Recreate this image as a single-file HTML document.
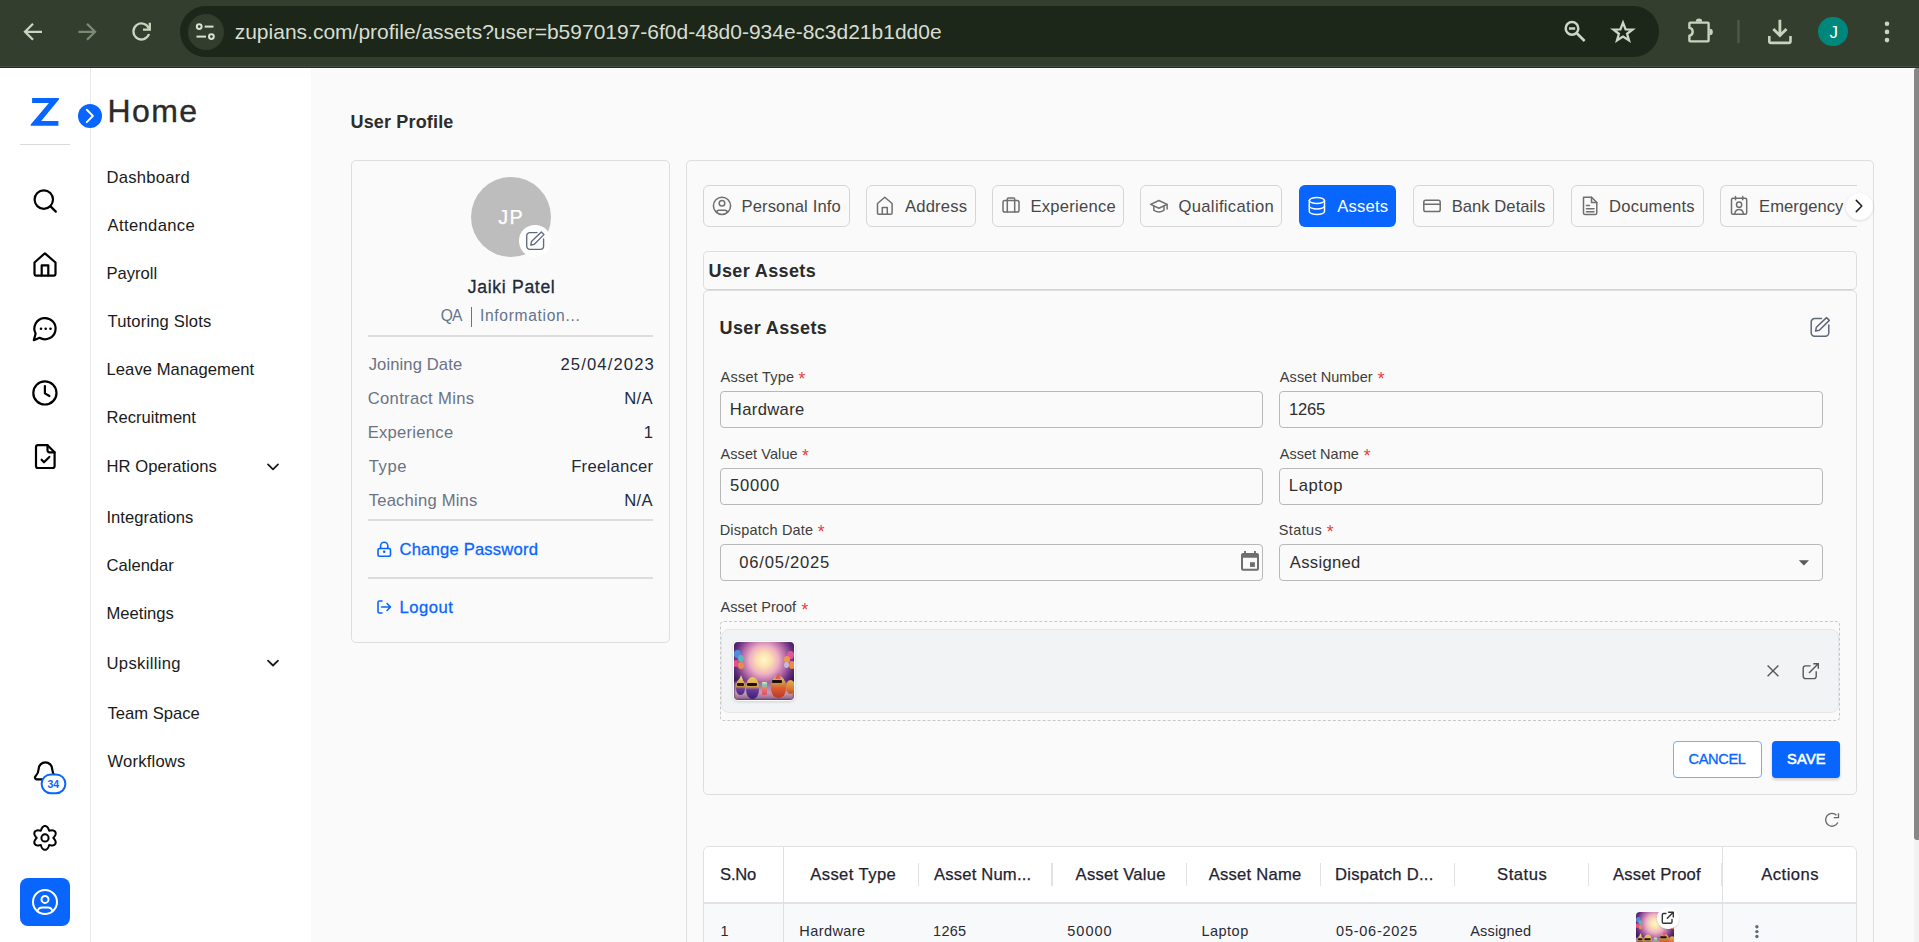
<!DOCTYPE html>
<html><head><meta charset="utf-8"><title>User Profile - Assets</title>
<style>
html,body{margin:0;padding:0;width:1919px;height:942px;overflow:hidden;background:#fafafa;font-family:"Liberation Sans",sans-serif;}
.t{position:absolute;white-space:pre;font-family:"Liberation Sans",sans-serif;}
svg{overflow:visible}
</style></head><body>
<div style="position:absolute;left:0px;top:0px;width:1919px;height:68px;background:#333e2f"></div>
<div style="position:absolute;left:0px;top:66px;width:1919px;height:1px;background:#444b41"></div>
<div style="position:absolute;left:0px;top:67px;width:1919px;height:1px;background:#232e21"></div>
<div style="position:absolute;left:180px;top:6px;width:1479px;height:51px;background:#1c2719;border-radius:25.5px"></div>
<div style="position:absolute;left:187.5px;top:13.8px;width:36px;height:36px;background:#323d2e;border-radius:50%"></div>
<div style="position:absolute;left:1818.2px;top:16.9px;width:29.6px;height:29.6px;background:#00877b;border-radius:50%"></div>
<div style="position:absolute;left:0px;top:68px;width:311px;height:874px;background:#ffffff"></div>
<div style="position:absolute;left:90px;top:68px;width:1px;height:874px;background:#e6e8ec"></div>
<div style="position:absolute;left:20px;top:144px;width:50px;height:1px;background:#dadada"></div>
<div style="position:absolute;left:20px;top:878.2px;width:50px;height:48px;background:#0866ff;border-radius:8px"></div>
<div style="position:absolute;left:351px;top:160px;width:319px;height:483px;box-sizing:border-box;border:1px solid #dedede;border-radius:5px;background:#fafafa"></div>
<div style="position:absolute;left:471px;top:177px;width:80px;height:80px;background:#bdbdbd;border-radius:50%"></div>
<div style="position:absolute;left:519px;top:225px;width:31.5px;height:31.5px;background:#ffffff;border-radius:50%"></div>
<div style="position:absolute;left:471px;top:307px;width:1.3px;height:20px;background:#64748b"></div>
<div style="position:absolute;left:368px;top:334.5px;width:285px;height:2px;background:#dcdcdc"></div>
<div style="position:absolute;left:368px;top:519px;width:285px;height:2px;background:#dcdcdc"></div>
<div style="position:absolute;left:368px;top:577px;width:285px;height:2px;background:#dcdcdc"></div>
<div style="position:absolute;left:686px;top:160px;width:1188px;height:800px;box-sizing:border-box;border:1px solid #dedede;border-radius:5px;background:#fafafa"></div>
<div style="position:absolute;left:703px;top:185px;width:147px;height:42px;box-sizing:border-box;border:1px solid #d6d6d6;border-radius:6px;background:#fafafa"></div>
<div style="position:absolute;left:866px;top:185px;width:110px;height:42px;box-sizing:border-box;border:1px solid #d6d6d6;border-radius:6px;background:#fafafa"></div>
<div style="position:absolute;left:992px;top:185px;width:132px;height:42px;box-sizing:border-box;border:1px solid #d6d6d6;border-radius:6px;background:#fafafa"></div>
<div style="position:absolute;left:1140px;top:185px;width:142px;height:42px;box-sizing:border-box;border:1px solid #d6d6d6;border-radius:6px;background:#fafafa"></div>
<div style="position:absolute;left:1299px;top:185px;width:97px;height:42px;background:#0866ff;border-radius:6px"></div>
<div style="position:absolute;left:1413px;top:185px;width:141px;height:42px;box-sizing:border-box;border:1px solid #d6d6d6;border-radius:6px;background:#fafafa"></div>
<div style="position:absolute;left:1571px;top:185px;width:133px;height:42px;box-sizing:border-box;border:1px solid #d6d6d6;border-radius:6px;background:#fafafa"></div>
<div style="position:absolute;left:1720px;top:185px;width:137px;height:42px;box-sizing:border-box;border:1px solid #d6d6d6;border-right:none;border-radius:6px 0 0 6px;background:#fafafa"></div>
<div style="position:absolute;left:703px;top:251px;width:1154px;height:39px;box-sizing:border-box;border:1px solid #dedede;border-bottom-color:#d4d4d4;border-radius:5px;background:#fafafa"></div>
<div style="position:absolute;left:703px;top:290px;width:1154px;height:505px;box-sizing:border-box;border:1px solid #dedede;border-radius:5px;background:#fafafa"></div>
<div style="position:absolute;left:720px;top:391px;width:543px;height:37px;box-sizing:border-box;border:1px solid #b8b8b8;border-radius:4px;background:#fafafa"></div>
<div style="position:absolute;left:1279px;top:391px;width:544px;height:37px;box-sizing:border-box;border:1px solid #b8b8b8;border-radius:4px;background:#fafafa"></div>
<div style="position:absolute;left:720px;top:468px;width:543px;height:37px;box-sizing:border-box;border:1px solid #b8b8b8;border-radius:4px;background:#fafafa"></div>
<div style="position:absolute;left:1279px;top:468px;width:544px;height:37px;box-sizing:border-box;border:1px solid #b8b8b8;border-radius:4px;background:#fafafa"></div>
<div style="position:absolute;left:720px;top:544px;width:543px;height:37px;box-sizing:border-box;border:1px solid #b8b8b8;border-radius:4px;background:#fafafa"></div>
<div style="position:absolute;left:1279px;top:544px;width:544px;height:37px;box-sizing:border-box;border:1px solid #b8b8b8;border-radius:4px;background:#fafafa"></div>
<div style="position:absolute;left:720px;top:621px;width:1120px;height:100px;box-sizing:border-box;border:1px dashed #c8c8c8;border-radius:4px"></div>
<div style="position:absolute;left:721px;top:629px;width:1118px;height:84px;box-sizing:border-box;border:1px solid #e4e6ea;border-radius:8px;background:#f2f3f5"></div>
<div style="position:absolute;left:1673px;top:741px;width:89px;height:37px;box-sizing:border-box;border:1px solid #7eaaf7;border-radius:4px;background:#fff"></div>
<div style="position:absolute;left:1772px;top:741px;width:68px;height:37px;background:#0866ff;border-radius:4px;box-shadow:0 2px 3px rgba(0,0,0,0.18)"></div>
<div style="position:absolute;left:703px;top:846px;width:1154px;height:120px;box-sizing:border-box;border:1px solid #e0e0e0;border-radius:6px;background:#f8f9fb;overflow:hidden"></div>
<div style="position:absolute;left:704px;top:847px;width:1152px;height:55px;background:#ffffff;border-radius:5px 5px 0 0"></div>
<div style="position:absolute;left:704px;top:902px;width:1152px;height:2px;background:#dfe2e6"></div>
<div style="position:absolute;left:783px;top:847px;width:1px;height:100px;background:#e0e0e0"></div>
<div style="position:absolute;left:1722px;top:847px;width:1px;height:100px;background:#e0e0e0"></div>
<div style="position:absolute;left:917.5px;top:862.5px;width:1.5px;height:23.5px;background:#e2e2e2"></div>
<div style="position:absolute;left:1051.3px;top:862.5px;width:1.5px;height:23.5px;background:#e2e2e2"></div>
<div style="position:absolute;left:1185.5px;top:862.5px;width:1.5px;height:23.5px;background:#e2e2e2"></div>
<div style="position:absolute;left:1319.6px;top:862.5px;width:1.5px;height:23.5px;background:#e2e2e2"></div>
<div style="position:absolute;left:1453.8px;top:862.5px;width:1.5px;height:23.5px;background:#e2e2e2"></div>
<div style="position:absolute;left:1587.6px;top:862.5px;width:1.5px;height:23.5px;background:#e2e2e2"></div>
<div style="position:absolute;left:1721px;top:862.5px;width:1.5px;height:23.5px;background:#e2e2e2"></div>
<div style="position:absolute;left:1914px;top:68px;width:5px;height:874px;background:#f1f1f1"></div>
<div style="position:absolute;left:1914px;top:68px;width:5px;height:771.5px;background:#878787;border-radius:3px 0 0 3px"></div>
<div style="position:absolute;left:733px;top:641px;width:62px;height:60px;border-radius:5px;background:#fff;box-shadow:0 1px 3px rgba(0,0,0,0.15)"></div>
<div style="position:absolute;left:734px;top:642px;width:60px;height:58px;border-radius:4px;overflow:hidden"><div style="position:absolute;left:0;top:0;width:60px;height:58px;overflow:hidden;filter:blur(0.6px);
background:radial-gradient(ellipse 40px 40px at 30px 18px, #fff8c8 0%, #fce0b0 18%, #eeb0c4 36%, #b46aa6 55%, #6a3282 72%, #3a1a5a 86%, #1a0c34 100%);">
  <div style="position:absolute;left:0;top:40px;width:60px;height:18px;background:linear-gradient(#9a6a98,#c8a0b8 60%,#8a5a88);filter:blur(1px)"></div>
  <div style="position:absolute;left:0px;top:8px;width:7px;height:8px;border-radius:50%;background:#4f8fd8;filter:blur(0.5px)"></div>
  <div style="position:absolute;left:4px;top:13px;width:6px;height:7px;border-radius:50%;background:#5ab7c0;filter:blur(0.5px)"></div>
  <div style="position:absolute;left:-1px;top:18px;width:6px;height:7px;border-radius:50%;background:#e0508a;filter:blur(0.5px)"></div>
  <div style="position:absolute;left:4px;top:20px;width:6px;height:7px;border-radius:50%;background:#e88a50;filter:blur(0.5px)"></div>
  <div style="position:absolute;left:53px;top:9px;width:7px;height:8px;border-radius:50%;background:#e055a0;filter:blur(0.5px)"></div>
  <div style="position:absolute;left:50px;top:14px;width:6px;height:7px;border-radius:50%;background:#f09a48;filter:blur(0.5px)"></div>
  <div style="position:absolute;left:55px;top:19px;width:6px;height:8px;border-radius:50%;background:#f08a40;filter:blur(0.5px)"></div>
  <div style="position:absolute;left:50px;top:20px;width:5px;height:6px;border-radius:50%;background:#c8b8d8;filter:blur(0.5px)"></div>
  <div style="position:absolute;left:1.5px;top:37px;width:9px;height:16px;border-radius:50% 50% 45% 45%;background:linear-gradient(#e6c458 0%,#c89a40 45%,#6a3a9a 62%,#4a2a7a 100%);filter:blur(0.5px)"></div>
  <div style="position:absolute;left:12px;top:35px;width:12.5px;height:22px;border-radius:50% 50% 45% 45%;background:linear-gradient(#e8c860 0%,#d8a848 42%,#6a3aa0 58%,#3a2070 100%);filter:blur(0.5px)"></div>
  <div style="position:absolute;left:27.7px;top:40px;width:5px;height:13px;border-radius:1px;background:linear-gradient(#f0e8c0,#7ad0b0 20%,#f07070 55%,#e05060);filter:blur(0.6px)"></div>
  <div style="position:absolute;left:36.8px;top:34px;width:15.5px;height:22px;border-radius:50% 50% 45% 45%;background:linear-gradient(#e8c060 0%,#c89040 35%,#e05a30 55%,#b83a20 100%);filter:blur(0.5px)"></div>
  <div style="position:absolute;left:52px;top:38px;width:9px;height:14px;border-radius:50%;background:linear-gradient(#e8b050,#e07a30 60%,#c05020);filter:blur(0.5px)"></div>
  <div style="position:absolute;left:3.2px;top:41px;width:7px;height:2.6px;background:#2a1414;border-radius:1px;filter:blur(0.3px)"></div>
  <div style="position:absolute;left:12.9px;top:41px;width:10px;height:3.2px;background:#1a1010;border-radius:1px;filter:blur(0.3px)"></div>
  <div style="position:absolute;left:37.5px;top:38.2px;width:10.5px;height:3.2px;background:#1a1010;border-radius:1px;filter:blur(0.3px)"></div>
  <div style="position:absolute;left:41px;top:31px;width:0;height:0;border-left:3.5px solid transparent;border-right:3.5px solid transparent;border-bottom:6.5px solid #e05a5a;filter:blur(0.3px)"></div>
  <div style="position:absolute;left:4.5px;top:33px;width:0;height:0;border-left:2px solid transparent;border-right:2px solid transparent;border-bottom:5px solid #e8d070;filter:blur(0.3px)"></div>
</div></div>
<div style="position:absolute;left:1636px;top:912px;width:38px;height:40px;border-radius:4px;overflow:hidden"><div style="position:absolute;left:0;top:0;transform:scale(0.64);transform-origin:0 0;width:60px;height:58px;overflow:hidden;filter:blur(0.6px);
background:radial-gradient(ellipse 40px 40px at 30px 18px, #fff8c8 0%, #fce0b0 18%, #eeb0c4 36%, #b46aa6 55%, #6a3282 72%, #3a1a5a 86%, #1a0c34 100%);">
  <div style="position:absolute;left:0;top:40px;width:60px;height:18px;background:linear-gradient(#9a6a98,#c8a0b8 60%,#8a5a88);filter:blur(1px)"></div>
  <div style="position:absolute;left:0px;top:8px;width:7px;height:8px;border-radius:50%;background:#4f8fd8;filter:blur(0.5px)"></div>
  <div style="position:absolute;left:4px;top:13px;width:6px;height:7px;border-radius:50%;background:#5ab7c0;filter:blur(0.5px)"></div>
  <div style="position:absolute;left:-1px;top:18px;width:6px;height:7px;border-radius:50%;background:#e0508a;filter:blur(0.5px)"></div>
  <div style="position:absolute;left:4px;top:20px;width:6px;height:7px;border-radius:50%;background:#e88a50;filter:blur(0.5px)"></div>
  <div style="position:absolute;left:53px;top:9px;width:7px;height:8px;border-radius:50%;background:#e055a0;filter:blur(0.5px)"></div>
  <div style="position:absolute;left:50px;top:14px;width:6px;height:7px;border-radius:50%;background:#f09a48;filter:blur(0.5px)"></div>
  <div style="position:absolute;left:55px;top:19px;width:6px;height:8px;border-radius:50%;background:#f08a40;filter:blur(0.5px)"></div>
  <div style="position:absolute;left:50px;top:20px;width:5px;height:6px;border-radius:50%;background:#c8b8d8;filter:blur(0.5px)"></div>
  <div style="position:absolute;left:1.5px;top:37px;width:9px;height:16px;border-radius:50% 50% 45% 45%;background:linear-gradient(#e6c458 0%,#c89a40 45%,#6a3a9a 62%,#4a2a7a 100%);filter:blur(0.5px)"></div>
  <div style="position:absolute;left:12px;top:35px;width:12.5px;height:22px;border-radius:50% 50% 45% 45%;background:linear-gradient(#e8c860 0%,#d8a848 42%,#6a3aa0 58%,#3a2070 100%);filter:blur(0.5px)"></div>
  <div style="position:absolute;left:27.7px;top:40px;width:5px;height:13px;border-radius:1px;background:linear-gradient(#f0e8c0,#7ad0b0 20%,#f07070 55%,#e05060);filter:blur(0.6px)"></div>
  <div style="position:absolute;left:36.8px;top:34px;width:15.5px;height:22px;border-radius:50% 50% 45% 45%;background:linear-gradient(#e8c060 0%,#c89040 35%,#e05a30 55%,#b83a20 100%);filter:blur(0.5px)"></div>
  <div style="position:absolute;left:52px;top:38px;width:9px;height:14px;border-radius:50%;background:linear-gradient(#e8b050,#e07a30 60%,#c05020);filter:blur(0.5px)"></div>
  <div style="position:absolute;left:3.2px;top:41px;width:7px;height:2.6px;background:#2a1414;border-radius:1px;filter:blur(0.3px)"></div>
  <div style="position:absolute;left:12.9px;top:41px;width:10px;height:3.2px;background:#1a1010;border-radius:1px;filter:blur(0.3px)"></div>
  <div style="position:absolute;left:37.5px;top:38.2px;width:10.5px;height:3.2px;background:#1a1010;border-radius:1px;filter:blur(0.3px)"></div>
  <div style="position:absolute;left:41px;top:31px;width:0;height:0;border-left:3.5px solid transparent;border-right:3.5px solid transparent;border-bottom:6.5px solid #e05a5a;filter:blur(0.3px)"></div>
  <div style="position:absolute;left:4.5px;top:33px;width:0;height:0;border-left:2px solid transparent;border-right:2px solid transparent;border-bottom:5px solid #e8d070;filter:blur(0.3px)"></div>
</div></div>
<svg style="position:absolute;left:0px;top:0px;" width="1919" height="68" viewBox="0 0 1919 68" fill="none">
<g stroke="#c8d6c0" stroke-width="2.3" fill="none" stroke-linecap="butt" stroke-linejoin="miter">
  <path d="M42 31.8 H25.5 M33 23.8 L25 31.8 L33 39.8"/>
  <path d="M78.5 31.8 H95 M87 23.8 L95 31.8 L87 39.8" stroke="#7b8a75"/>
  <path d="M148.9 28.6 A8 8 0 1 0 149 34"/>
  <path d="M149.8 22.8 V29.6 H143"/>
</g>
<g stroke="#d8e2d2" stroke-width="2" stroke-linecap="butt" fill="none">
  <circle cx="199.2" cy="26.6" r="2.4"/>
  <path d="M204.6 26.6 H213.5"/>
  <circle cx="211.4" cy="36.6" r="2.4"/>
  <path d="M196.5 36.6 H206"/>
</g>
<g stroke="#ccd6c6" stroke-width="2.5" fill="none" stroke-linecap="butt" stroke-linejoin="miter">
  <circle cx="1572" cy="28.4" r="6.3"/>
  <path d="M1569 28.5 H1575.2"/>
  <path d="M1576.6 33 L1584.6 41"/>
  <path d="M1623 22.6 L1625.6 29.4 L1632.6 29.5 L1627.1 33.8 L1629 40.3 L1623 36.5 L1617 40.3 L1618.9 33.8 L1613.4 29.5 L1620.4 29.4 Z" stroke-width="2.3"/>
</g>
<g stroke="#c5d5bd" stroke-width="2.4" fill="none" stroke-linejoin="round">
  <path d="M1690.2 22.6 H1707.8 A0.8 0.8 0 0 1 1708.6 23.4 V40.6 A0.8 0.8 0 0 1 1707.8 41.4 H1690.2 A0.8 0.8 0 0 1 1689.4 40.6 V35.6 A3.9 3.9 0 0 0 1689.4 27.9 V23.4 A0.8 0.8 0 0 1 1690.2 22.6 Z"/>
  <path d="M1779.9 19.8 V35.2 M1773.3 29 L1779.9 35.6 L1786.5 29" stroke-width="2.8" stroke-linejoin="miter"/>
  <path d="M1769.3 36 V41.3 A1.6 1.6 0 0 0 1770.9 42.9 H1788.9 A1.6 1.6 0 0 0 1790.5 41.3 V36" stroke-width="2.6"/>
</g>
<g fill="#c5d5bd">
  <path d="M1695.8 21.8 A3.2 3.2 0 0 1 1702.2 21.8 Z"/>
  <path d="M1709.6 28.8 A3.2 3.2 0 0 1 1709.6 35.2 Z"/>
</g>
<rect x="1737.2" y="19.8" width="2.5" height="23.5" rx="1" fill="#4b5947"/>
<g fill="#c8d6c0">
  <circle cx="1887" cy="23.8" r="2.3"/>
  <circle cx="1887" cy="31.9" r="2.3"/>
  <circle cx="1887" cy="40.1" r="2.3"/>
</g>
</svg>
<svg style="position:absolute;left:0px;top:68px;top:0px;" width="311" height="874" viewBox="0 0 311 874" fill="none">
<path d="M32.1 98.1 H58.9 V99.6 L41.2 121 H58.4 V125.8 H30.7 V124.4 L48.9 103.1 H32.1 Z" fill="#0866ff"/>
<circle cx="90" cy="115.9" r="12" fill="#0866ff"/>
<path d="M86.8 109.8 L92.9 115.9 L86.8 122.1" stroke="#fff" stroke-width="2" fill="none" stroke-linecap="round" stroke-linejoin="round"/>
<g stroke="#000" stroke-width="2.2" fill="none" stroke-linecap="round" stroke-linejoin="round">
  <circle cx="43.8" cy="199.6" r="9.2"/>
  <path d="M50.6 206.4 L55.8 211.6"/>
  <path d="M34.5 262.5 L44.9 253.3 L55.5 262.5 V274 A1.6 1.6 0 0 1 54 275.6 H36 A1.6 1.6 0 0 1 34.5 274 Z"/>
  <path d="M41.7 275.6 V265.4 H48.3 V275.6"/>
  <path d="M33.8 340.2 L35.6 333.6 A10.6 10.6 0 1 1 39.6 337.8 Z"/>
  <circle cx="44.9" cy="392.9" r="11.6"/>
  <path d="M44.9 386 V393.4 L49.4 396"/>
  <path d="M47.5 445.2 H38 A2 2 0 0 0 36 447.2 V466 A2 2 0 0 0 38 468 H52.6 A2 2 0 0 0 54.6 466 V452.3 Z"/>
  <path d="M47.5 445.2 V450.3 A2 2 0 0 0 49.5 452.3 H54.6"/>
  <path d="M41.6 459.7 L44 462.3 L49.3 456.9"/>
  <path d="M36.6 779.3 A1.7 1.7 0 0 1 35.3 776.6 C37.3 774.4 38.6 772.6 38.6 769.2 A6.8 6.8 0 0 1 52.2 769.2 C52.2 772.6 53.5 774.4 55.5 776.6 A1.7 1.7 0 0 1 54.2 779.3 Z"/>
</g>
<g fill="#000">
  <circle cx="41" cy="328.8" r="1.3"/>
  <circle cx="45.7" cy="328.8" r="1.3"/>
  <circle cx="50.5" cy="328.8" r="1.3"/>
</g>
<rect x="41.6" y="774.4" width="23.8" height="18.8" rx="9.4" fill="#fff" stroke="#0866ff" stroke-width="2"/>
<g stroke="#000" stroke-width="2" fill="none" stroke-linejoin="round">
  <path d="M53.30 837.90 L53.51 838.20 L53.78 838.51 L54.08 838.85 L54.38 839.22 L54.66 839.60 L54.93 840.01 L55.17 840.44 L55.37 840.87 L55.52 841.32 L55.63 841.77 L55.68 842.21 L55.67 842.65 L55.61 843.07 L55.49 843.48 L55.31 843.85 L55.07 844.19 L54.78 844.50 L54.45 844.77 L54.07 844.99 L53.66 845.17 L53.22 845.30 L52.76 845.39 L52.28 845.44 L51.79 845.44 L51.31 845.42 L50.83 845.36 L50.37 845.29 L49.92 845.20 L49.51 845.12 L49.15 845.09 L49.00 845.42 L48.86 845.81 L48.71 846.24 L48.55 846.68 L48.36 847.12 L48.14 847.56 L47.89 847.97 L47.61 848.36 L47.30 848.72 L46.96 849.04 L46.60 849.30 L46.22 849.52 L45.82 849.67 L45.41 849.77 L45.00 849.80 L44.59 849.77 L44.18 849.67 L43.78 849.52 L43.40 849.30 L43.04 849.04 L42.70 848.72 L42.39 848.36 L42.11 847.97 L41.86 847.56 L41.64 847.12 L41.45 846.68 L41.29 846.24 L41.14 845.81 L41.00 845.42 L40.85 845.09 L40.49 845.12 L40.08 845.20 L39.63 845.29 L39.17 845.36 L38.69 845.42 L38.21 845.44 L37.72 845.44 L37.24 845.39 L36.78 845.30 L36.34 845.17 L35.93 844.99 L35.55 844.77 L35.22 844.50 L34.93 844.19 L34.69 843.85 L34.51 843.48 L34.39 843.07 L34.33 842.65 L34.32 842.21 L34.37 841.77 L34.48 841.32 L34.63 840.87 L34.83 840.44 L35.07 840.01 L35.34 839.60 L35.62 839.22 L35.92 838.85 L36.22 838.51 L36.49 838.20 L36.70 837.90 L36.49 837.60 L36.22 837.29 L35.92 836.95 L35.62 836.58 L35.34 836.20 L35.07 835.79 L34.83 835.36 L34.63 834.93 L34.48 834.48 L34.37 834.03 L34.32 833.59 L34.33 833.15 L34.39 832.73 L34.51 832.32 L34.69 831.95 L34.93 831.61 L35.22 831.30 L35.55 831.03 L35.93 830.81 L36.34 830.63 L36.78 830.50 L37.24 830.41 L37.72 830.36 L38.21 830.36 L38.69 830.38 L39.17 830.44 L39.63 830.51 L40.08 830.60 L40.49 830.68 L40.85 830.71 L41.00 830.38 L41.14 829.99 L41.29 829.56 L41.45 829.12 L41.64 828.68 L41.86 828.24 L42.11 827.83 L42.39 827.44 L42.70 827.08 L43.04 826.76 L43.40 826.50 L43.78 826.28 L44.18 826.13 L44.59 826.03 L45.00 826.00 L45.41 826.03 L45.82 826.13 L46.22 826.28 L46.60 826.50 L46.96 826.76 L47.30 827.08 L47.61 827.44 L47.89 827.83 L48.14 828.24 L48.36 828.68 L48.55 829.12 L48.71 829.56 L48.86 829.99 L49.00 830.38 L49.15 830.71 L49.51 830.68 L49.92 830.60 L50.37 830.51 L50.83 830.44 L51.31 830.38 L51.79 830.36 L52.28 830.36 L52.76 830.41 L53.22 830.50 L53.66 830.63 L54.07 830.81 L54.45 831.03 L54.78 831.30 L55.07 831.61 L55.31 831.95 L55.49 832.32 L55.61 832.73 L55.67 833.15 L55.68 833.59 L55.63 834.03 L55.52 834.48 L55.37 834.93 L55.17 835.36 L54.93 835.79 L54.66 836.20 L54.38 836.58 L54.08 836.95 L53.78 837.29 L53.51 837.60 L53.30 837.90 Z"/>
  <circle cx="45" cy="837.9" r="3.6"/>
</g>
<g stroke="#fff" stroke-width="2" fill="none">
  <circle cx="45" cy="902" r="12"/>
  <circle cx="45" cy="899.4" r="3.5"/>
  <path d="M37.6 910.9 A4.8 4.8 0 0 1 42.3 907.4 H47.7 A4.8 4.8 0 0 1 52.4 911"/>
</g>
</svg>
<svg style="position:absolute;left:0px;top:0px;" width="311" height="942" viewBox="0 0 311 942" fill="none">
<g stroke="#1a1a1a" stroke-width="1.8" fill="none" stroke-linecap="round" stroke-linejoin="round">
  <path d="M268 464.4 L273 469.3 L278 464.4"/>
  <path d="M268 660.6 L273 665.5 L278 660.6"/>
</g>
</svg>
<svg style="position:absolute;left:0px;top:0px;" width="700" height="700" viewBox="0 0 700 700" fill="none">
<g stroke="#5f6b7d" stroke-width="1.35" fill="none" stroke-linecap="round" stroke-linejoin="round">
  <path d="M537 232.6 H530 A3.3 3.3 0 0 0 526.7 235.9 V246.1 A3.3 3.3 0 0 0 530 249.4 H540.3 A3.3 3.3 0 0 0 543.6 246.1 V239"/>
  <path d="M530.8 245 L531.5 241.4 L541.3 232 L543.9 234.6 L534.3 244.3 Z"/>
</g>
<g stroke="#0866ff" stroke-width="1.6" fill="none" stroke-linecap="round" stroke-linejoin="round">
  <rect x="378" y="548.5" width="12.5" height="7.8" rx="1.5"/>
  <path d="M380.6 548.5 V545.8 A3.6 3.6 0 0 1 387.8 545.8 V548.5"/>
  <path d="M382 601 H379.5 A1.5 1.5 0 0 0 378 602.5 V611.5 A1.5 1.5 0 0 0 379.5 613 H382"/>
  <path d="M381.6 607 H390.4 M387.1 603.5 L390.5 607 L387.1 610.5"/>
</g>
<circle cx="384.2" cy="551.8" r="1.3" fill="#0866ff"/>
</svg>
<svg style="position:absolute;left:0px;top:0px;" width="1919" height="942" viewBox="0 0 1919 942" fill="none">
<g stroke="#6f6f6f" stroke-width="1.5" fill="none" stroke-linecap="round" stroke-linejoin="round">
  <circle cx="722" cy="205.8" r="8.6"/>
  <circle cx="722" cy="203.2" r="2.8"/>
  <path d="M716.6 212.4 A2.3 2.3 0 0 1 718.8 210.3 H725.2 A2.3 2.3 0 0 1 727.4 212.4"/>
  <path d="M877.5 203.5 L884.8 197.3 L892.1 203.5 V213 A1.3 1.3 0 0 1 890.8 214.3 H878.8 A1.3 1.3 0 0 1 877.5 213 Z"/>
  <path d="M882.3 214.3 V207.5 H887.3 V214.3"/>
  <rect x="1003" y="200.6" width="16" height="11.5" rx="1.8"/>
  <path d="M1007.3 212.1 V200.6 M1014.7 212.1 V200.6 M1007.3 200.6 V198.9 A1 1 0 0 1 1008.3 197.9 H1013.7 A1 1 0 0 1 1014.7 198.9 V200.6"/>
  <path d="M1150.7 204.4 L1158.9 200.5 L1167.1 204.4 L1158.9 208.3 Z"/>
  <path d="M1153.8 206.1 V210.3 C1156 212.4 1161.8 212.4 1164 210.3 V206.1"/>
  <path d="M1167.1 204.4 V209"/>
  <path d="M1583.5 197.2 H1591.5 L1596.8 202.5 V213 A1.5 1.5 0 0 1 1595.3 214.5 H1585 A1.5 1.5 0 0 1 1583.5 213 Z"/>
  <path d="M1591.5 197.2 V202.5 H1596.8"/>
  <path d="M1586.5 205.5 H1589.5 M1586.5 208.7 H1594 M1586.5 211.8 H1594"/>
  <rect x="1423.8" y="200.2" width="16.4" height="11.4" rx="1.8"/>
  <path d="M1423.8 204.3 H1440.2"/>
  <rect x="1731.5" y="198.3" width="15.2" height="16" rx="1.5"/>
  <path d="M1735.5 196.5 V199.8 M1742.7 196.5 V199.8"/>
  <circle cx="1739.1" cy="204.7" r="2.6"/>
  <path d="M1734.6 214.3 C1735.2 210.8 1737 209.6 1739.1 209.6 C1741.2 209.6 1743 210.8 1743.6 214.3"/>
</g>
<g stroke="#ffffff" stroke-width="1.5" fill="none" stroke-linecap="round" stroke-linejoin="round">
  <ellipse cx="1316.9" cy="200.5" rx="7.6" ry="3"/>
  <path d="M1309.3 200.5 V211.5 A7.6 3 0 0 0 1324.5 211.5 V200.5"/>
  <path d="M1309.3 206 A7.6 3 0 0 0 1324.5 206"/>
</g>
</svg>
<svg style="position:absolute;left:0px;top:0px;" width="1919" height="942" viewBox="0 0 1919 942" fill="none">
<g stroke="#5f6877" stroke-width="1.5" fill="none" stroke-linecap="round" stroke-linejoin="round">
  <path d="M1821.5 318.6 H1814.6 A3.4 3.4 0 0 0 1811.2 322 V332.8 A3.4 3.4 0 0 0 1814.6 336.2 H1825.4 A3.4 3.4 0 0 0 1828.8 332.8 V325"/>
  <path d="M1815.6 331 L1816.4 327.2 L1826.5 317.6 L1829.3 320.4 L1819.3 330.3 Z"/>
</g>
<g fill="#6e6e6e" fill-rule="evenodd">
  <path d="M1243 553 H1257 A2 2 0 0 1 1259 555 V568.7 A2 2 0 0 1 1257 570.7 H1243 A2 2 0 0 1 1241 568.7 V555 A2 2 0 0 1 1243 553 Z M1243 557.8 V568.8 H1257 V557.8 Z"/>
  <rect x="1244.1" y="551" width="1.9" height="2.5"/>
  <rect x="1254" y="551" width="1.9" height="2.5"/>
  <rect x="1250" y="562.2" width="4.9" height="4.7"/>
</g>
<path d="M1798.8 560.2 H1809 L1803.9 565.4 Z" fill="#5a5a5a"/>
<g stroke="#585858" stroke-width="1.4" fill="none" stroke-linecap="butt" stroke-linejoin="miter">
  <path d="M1767.6 665.4 L1778.4 676.2 M1778.4 665.4 L1767.6 676.2"/>
  <path d="M1810.6 665.9 H1805.5 A2.3 2.3 0 0 0 1803.2 668.2 V676.3 A2.3 2.3 0 0 0 1805.5 678.6 H1813.9 A2.3 2.3 0 0 0 1816.2 676.3 V671.2"/>
  <path d="M1809 673 L1818.2 663.8 M1813.3 663.8 H1818.3 V668.8"/>
</g>
</svg>
<svg style="position:absolute;left:0px;top:0px;" width="1919" height="942" viewBox="0 0 1919 942" fill="none"><g stroke="#666" stroke-width="1.3" fill="none" stroke-linecap="butt" stroke-linejoin="miter">
<path d="M1837.8 822.5 A6.4 6.4 0 1 1 1836.5 815.3"/><path d="M1838.5 813.2 V817.6 H1833.8"/></g></svg>
<div class="t" style="left:1829.5px;top:24px;font-size:17px;line-height:17px;font-weight:400;color:#ffffff;letter-spacing:0.000px;">J</div>
<div class="t" style="left:234.7px;top:21px;font-size:21px;line-height:21px;font-weight:400;color:#d6ddd2;letter-spacing:0.000px;">zupians.com/profile/assets?user=b5970197-6f0d-48d0-934e-8c3d21b1dd0e</div>
<div class="t" style="left:47.5px;top:779px;font-size:10.5px;line-height:10.5px;font-weight:700;color:#0866ff;letter-spacing:0.000px;">34</div>
<div class="t" style="left:107.4px;top:95px;font-size:32px;line-height:32px;font-weight:400;color:#2b2b2b;letter-spacing:1.433px;-webkit-text-stroke:0.35px #2b2b2b;">Home</div>
<div class="t" style="left:106.5px;top:170px;font-size:16.6px;line-height:16.6px;font-weight:400;color:#1a1a1a;letter-spacing:0.250px;">Dashboard</div>
<div class="t" style="left:107.5px;top:218px;font-size:16.6px;line-height:16.6px;font-weight:400;color:#1a1a1a;letter-spacing:0.367px;">Attendance</div>
<div class="t" style="left:106.5px;top:266px;font-size:16.6px;line-height:16.6px;font-weight:400;color:#1a1a1a;letter-spacing:0.000px;">Payroll</div>
<div class="t" style="left:107.5px;top:314px;font-size:16.6px;line-height:16.6px;font-weight:400;color:#1a1a1a;letter-spacing:0.154px;">Tutoring Slots</div>
<div class="t" style="left:106.5px;top:362px;font-size:16.6px;line-height:16.6px;font-weight:400;color:#1a1a1a;letter-spacing:0.067px;">Leave Management</div>
<div class="t" style="left:106.5px;top:410px;font-size:16.6px;line-height:16.6px;font-weight:400;color:#1a1a1a;letter-spacing:0.000px;">Recruitment</div>
<div class="t" style="left:106.5px;top:459px;font-size:16.6px;line-height:16.6px;font-weight:400;color:#1a1a1a;letter-spacing:0.042px;">HR Operations</div>
<div class="t" style="left:106.5px;top:510px;font-size:16.6px;line-height:16.6px;font-weight:400;color:#1a1a1a;letter-spacing:0.000px;">Integrations</div>
<div class="t" style="left:106.5px;top:558px;font-size:16.6px;line-height:16.6px;font-weight:400;color:#1a1a1a;letter-spacing:0.000px;">Calendar</div>
<div class="t" style="left:106.5px;top:606px;font-size:16.6px;line-height:16.6px;font-weight:400;color:#1a1a1a;letter-spacing:0.000px;">Meetings</div>
<div class="t" style="left:106.5px;top:656px;font-size:16.6px;line-height:16.6px;font-weight:400;color:#1a1a1a;letter-spacing:0.333px;">Upskilling</div>
<div class="t" style="left:107.5px;top:706px;font-size:16.6px;line-height:16.6px;font-weight:400;color:#1a1a1a;letter-spacing:0.000px;">Team Space</div>
<div class="t" style="left:107.5px;top:754px;font-size:16.6px;line-height:16.6px;font-weight:400;color:#1a1a1a;letter-spacing:0.200px;">Workflows</div>
<div class="t" style="left:350.5px;top:113px;font-size:18px;line-height:18px;font-weight:700;color:#2d2d2d;letter-spacing:0.164px;">User Profile</div>
<div class="t" style="left:498.3px;top:208px;font-size:19.8px;line-height:19.8px;font-weight:400;color:#ffffff;letter-spacing:1.200px;-webkit-text-stroke:0.25px #fff;">JP</div>
<div class="t" style="left:467.8px;top:279px;font-size:17.6px;line-height:17.6px;font-weight:400;color:#1e293b;letter-spacing:0.680px;-webkit-text-stroke:0.3px #1e293b;">Jaiki Patel</div>
<div class="t" style="left:440.7px;top:308px;font-size:15.6px;line-height:15.6px;font-weight:400;color:#64748b;letter-spacing:-0.900px;">QA</div>
<div class="t" style="left:480.0px;top:308px;font-size:15.6px;line-height:15.6px;font-weight:400;color:#64748b;letter-spacing:0.677px;">Information...</div>
<div class="t" style="left:368.7px;top:357px;font-size:16.6px;line-height:16.6px;font-weight:400;color:#6b7383;letter-spacing:0.109px;">Joining Date</div>
<div class="t" style="left:560.5px;top:357px;font-size:16.6px;line-height:16.6px;font-weight:400;color:#1e293b;letter-spacing:1.144px;">25/04/2023</div>
<div class="t" style="left:367.7px;top:391px;font-size:16.6px;line-height:16.6px;font-weight:400;color:#6b7383;letter-spacing:0.333px;">Contract Mins</div>
<div class="t" style="left:624.2px;top:391px;font-size:16.6px;line-height:16.6px;font-weight:400;color:#1e293b;letter-spacing:0.300px;">N/A</div>
<div class="t" style="left:367.7px;top:425px;font-size:16.6px;line-height:16.6px;font-weight:400;color:#6b7383;letter-spacing:0.267px;">Experience</div>
<div class="t" style="left:643.8px;top:425px;font-size:16.6px;line-height:16.6px;font-weight:400;color:#1e293b;letter-spacing:0.300px;">1</div>
<div class="t" style="left:368.7px;top:459px;font-size:16.6px;line-height:16.6px;font-weight:400;color:#6b7383;letter-spacing:0.600px;">Type</div>
<div class="t" style="left:571.2px;top:459px;font-size:16.6px;line-height:16.6px;font-weight:400;color:#1e293b;letter-spacing:0.289px;">Freelancer</div>
<div class="t" style="left:368.7px;top:493px;font-size:16.6px;line-height:16.6px;font-weight:400;color:#6b7383;letter-spacing:0.217px;">Teaching Mins</div>
<div class="t" style="left:624.2px;top:493px;font-size:16.6px;line-height:16.6px;font-weight:400;color:#1e293b;letter-spacing:0.300px;">N/A</div>
<div class="t" style="left:399.5px;top:542px;font-size:16.6px;line-height:16.6px;font-weight:400;color:#0866ff;letter-spacing:0.200px;-webkit-text-stroke:0.3px #0866ff;">Change Password</div>
<div class="t" style="left:399.5px;top:600px;font-size:16.6px;line-height:16.6px;font-weight:400;color:#0866ff;letter-spacing:0.540px;-webkit-text-stroke:0.3px #0866ff;">Logout</div>
<div class="t" style="left:741.5px;top:199px;font-size:16.6px;line-height:16.6px;font-weight:400;color:#474747;letter-spacing:0.117px;">Personal Info</div>
<div class="t" style="left:905.1px;top:199px;font-size:16.6px;line-height:16.6px;font-weight:400;color:#474747;letter-spacing:0.167px;">Address</div>
<div class="t" style="left:1030.5px;top:199px;font-size:16.6px;line-height:16.6px;font-weight:400;color:#474747;letter-spacing:0.244px;">Experience</div>
<div class="t" style="left:1178.5px;top:199px;font-size:16.6px;line-height:16.6px;font-weight:400;color:#474747;letter-spacing:0.333px;">Qualification</div>
<div class="t" style="left:1337.3px;top:199px;font-size:16.6px;line-height:16.6px;font-weight:400;color:#ffffff;letter-spacing:0.200px;">Assets</div>
<div class="t" style="left:1451.7px;top:199px;font-size:16.6px;line-height:16.6px;font-weight:400;color:#474747;letter-spacing:0.045px;">Bank Details</div>
<div class="t" style="left:1609.0px;top:199px;font-size:16.6px;line-height:16.6px;font-weight:400;color:#474747;letter-spacing:0.213px;">Documents</div>
<div class="t" style="left:1759.1px;top:199px;font-size:16.6px;line-height:16.6px;font-weight:400;color:#474747;letter-spacing:0.050px;">Emergency</div>
<div class="t" style="left:708.6px;top:262px;font-size:18px;line-height:18px;font-weight:700;color:#2b2b2b;letter-spacing:0.370px;">User Assets</div>
<div class="t" style="left:719.5px;top:319px;font-size:18px;line-height:18px;font-weight:700;color:#2b2b2b;letter-spacing:0.390px;">User Assets</div>
<div class="t" style="left:720.6px;top:370px;font-size:14.5px;line-height:14.5px;font-weight:400;color:#3d3d3d;letter-spacing:0.222px;">Asset Type</div>
<div class="t" style="left:729.8px;top:402px;font-size:16.6px;line-height:16.6px;font-weight:400;color:#2e2e2e;letter-spacing:0.371px;">Hardware</div>
<div class="t" style="left:1279.8px;top:370px;font-size:14.5px;line-height:14.5px;font-weight:400;color:#3d3d3d;letter-spacing:0.091px;">Asset Number</div>
<div class="t" style="left:1289.0px;top:402px;font-size:16.6px;line-height:16.6px;font-weight:400;color:#2e2e2e;letter-spacing:-0.233px;">1265</div>
<div class="t" style="left:720.5px;top:447px;font-size:14.5px;line-height:14.5px;font-weight:400;color:#3d3d3d;letter-spacing:0.080px;">Asset Value</div>
<div class="t" style="left:730.0px;top:478px;font-size:16.6px;line-height:16.6px;font-weight:400;color:#2e2e2e;letter-spacing:0.750px;">50000</div>
<div class="t" style="left:1279.8px;top:447px;font-size:14.5px;line-height:14.5px;font-weight:400;color:#3d3d3d;letter-spacing:0.000px;">Asset Name</div>
<div class="t" style="left:1288.8px;top:478px;font-size:16.6px;line-height:16.6px;font-weight:400;color:#2e2e2e;letter-spacing:0.600px;">Laptop</div>
<div class="t" style="left:719.7px;top:523px;font-size:14.5px;line-height:14.5px;font-weight:400;color:#3d3d3d;letter-spacing:0.200px;">Dispatch Date</div>
<div class="t" style="left:739.3px;top:555px;font-size:16.6px;line-height:16.6px;font-weight:400;color:#2e2e2e;letter-spacing:0.767px;">06/05/2025</div>
<div class="t" style="left:1278.8px;top:523px;font-size:14.5px;line-height:14.5px;font-weight:400;color:#3d3d3d;letter-spacing:0.380px;">Status</div>
<div class="t" style="left:1289.8px;top:555px;font-size:16.6px;line-height:16.6px;font-weight:400;color:#2e2e2e;letter-spacing:0.314px;">Assigned</div>
<div class="t" style="left:798.6px;top:371px;font-size:17.5px;line-height:17.5px;font-weight:400;color:#ef3b3b;letter-spacing:0.000px;">*</div>
<div class="t" style="left:1377.8px;top:371px;font-size:17.5px;line-height:17.5px;font-weight:400;color:#ef3b3b;letter-spacing:0.000px;">*</div>
<div class="t" style="left:801.9px;top:448px;font-size:17.5px;line-height:17.5px;font-weight:400;color:#ef3b3b;letter-spacing:0.000px;">*</div>
<div class="t" style="left:1363.7px;top:448px;font-size:17.5px;line-height:17.5px;font-weight:400;color:#ef3b3b;letter-spacing:0.000px;">*</div>
<div class="t" style="left:817.7px;top:524px;font-size:17.5px;line-height:17.5px;font-weight:400;color:#ef3b3b;letter-spacing:0.000px;">*</div>
<div class="t" style="left:1326.8px;top:524px;font-size:17.5px;line-height:17.5px;font-weight:400;color:#ef3b3b;letter-spacing:0.000px;">*</div>
<div class="t" style="left:801.4px;top:602px;font-size:17.5px;line-height:17.5px;font-weight:400;color:#ef3b3b;letter-spacing:0.000px;">*</div>
<div class="t" style="left:720.4px;top:600px;font-size:14.5px;line-height:14.5px;font-weight:400;color:#3d3d3d;letter-spacing:0.080px;">Asset Proof</div>
<div class="t" style="left:1688.6px;top:752px;font-size:14.6px;line-height:14.6px;font-weight:400;color:#0866ff;letter-spacing:-0.380px;-webkit-text-stroke:0.35px #0866ff;">CANCEL</div>
<div class="t" style="left:1787.1px;top:752px;font-size:14.6px;line-height:14.6px;font-weight:400;color:#ffffff;letter-spacing:0.200px;-webkit-text-stroke:0.6px #fff;">SAVE</div>
<div class="t" style="left:720.1px;top:867px;font-size:16.6px;line-height:16.6px;font-weight:400;color:#1f2330;letter-spacing:-0.233px;-webkit-text-stroke:0.25px #1f2330;">S.No</div>
<div class="t" style="left:810.2px;top:867px;font-size:16.6px;line-height:16.6px;font-weight:400;color:#1f2330;letter-spacing:0.422px;-webkit-text-stroke:0.25px #1f2330;">Asset Type</div>
<div class="t" style="left:934.1px;top:867px;font-size:16.6px;line-height:16.6px;font-weight:400;color:#1f2330;letter-spacing:0.182px;-webkit-text-stroke:0.25px #1f2330;">Asset Num...</div>
<div class="t" style="left:1075.6px;top:867px;font-size:16.6px;line-height:16.6px;font-weight:400;color:#1f2330;letter-spacing:0.260px;-webkit-text-stroke:0.25px #1f2330;">Asset Value</div>
<div class="t" style="left:1208.8px;top:867px;font-size:16.6px;line-height:16.6px;font-weight:400;color:#1f2330;letter-spacing:0.222px;-webkit-text-stroke:0.25px #1f2330;">Asset Name</div>
<div class="t" style="left:1335.1px;top:867px;font-size:16.6px;line-height:16.6px;font-weight:400;color:#1f2330;letter-spacing:0.267px;-webkit-text-stroke:0.25px #1f2330;">Dispatch D...</div>
<div class="t" style="left:1497.0px;top:867px;font-size:16.6px;line-height:16.6px;font-weight:400;color:#1f2330;letter-spacing:0.560px;-webkit-text-stroke:0.25px #1f2330;">Status</div>
<div class="t" style="left:1612.9px;top:867px;font-size:16.6px;line-height:16.6px;font-weight:400;color:#1f2330;letter-spacing:0.200px;-webkit-text-stroke:0.25px #1f2330;">Asset Proof</div>
<div class="t" style="left:1761.2px;top:867px;font-size:16.6px;line-height:16.6px;font-weight:400;color:#1f2330;letter-spacing:0.500px;-webkit-text-stroke:0.25px #1f2330;">Actions</div>
<div class="t" style="left:720.5px;top:924px;font-size:14.5px;line-height:14.5px;font-weight:400;color:#2a2a33;letter-spacing:0.000px;">1</div>
<div class="t" style="left:799.3px;top:924px;font-size:14.5px;line-height:14.5px;font-weight:400;color:#2a2a33;letter-spacing:0.414px;">Hardware</div>
<div class="t" style="left:933.1px;top:924px;font-size:14.5px;line-height:14.5px;font-weight:400;color:#2a2a33;letter-spacing:0.267px;">1265</div>
<div class="t" style="left:1067.3px;top:924px;font-size:14.5px;line-height:14.5px;font-weight:400;color:#2a2a33;letter-spacing:0.975px;">50000</div>
<div class="t" style="left:1201.4px;top:924px;font-size:14.5px;line-height:14.5px;font-weight:400;color:#2a2a33;letter-spacing:0.500px;">Laptop</div>
<div class="t" style="left:1336.1px;top:924px;font-size:14.5px;line-height:14.5px;font-weight:400;color:#2a2a33;letter-spacing:0.744px;">05-06-2025</div>
<div class="t" style="left:1470.3px;top:924px;font-size:14.5px;line-height:14.5px;font-weight:400;color:#2a2a33;letter-spacing:0.143px;">Assigned</div>
<div style="position:absolute;left:1845.5px;top:192.5px;width:27px;height:27px;border-radius:50%;background:#fff;box-shadow:0 1px 3px rgba(0,0,0,0.12)"></div>
<svg style="position:absolute;left:0;top:0" width="1919" height="942"><path d="M1856.3 200.4 L1861.8 206 L1856.3 211.6" stroke="#1e1e1e" stroke-width="1.5" fill="none" stroke-linecap="round" stroke-linejoin="round"/></svg>
<div style="position:absolute;left:1657px;top:907px;width:21.6px;height:21.6px;border-radius:50%;background:#fff;box-shadow:0 1px 2px rgba(0,0,0,0.12)"></div>
<svg style="position:absolute;left:0;top:0" width="1919" height="942"><g stroke="#333" stroke-width="1.4" fill="none" stroke-linecap="round" stroke-linejoin="round">
<path d="M1666 913.5 H1663.6 A1.3 1.3 0 0 0 1662.3 914.8 V921.9 A1.3 1.3 0 0 0 1663.6 923.2 H1670.7 A1.3 1.3 0 0 0 1672 921.9 V919.5"/>
<path d="M1668.5 912.3 H1673.3 V917.1 M1673.3 912.3 L1667.3 918.3"/></g>
<g fill="#5f6b7a"><circle cx="1756.9" cy="926.7" r="1.7"/><circle cx="1756.9" cy="931.6" r="1.7"/><circle cx="1756.9" cy="936.5" r="1.7"/></g></svg>
</body></html>
